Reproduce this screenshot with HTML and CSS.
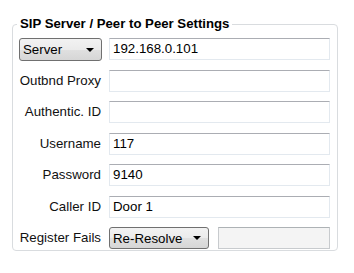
FILE: index.html
```html
<!DOCTYPE html>
<html>
<head>
<meta charset="utf-8">
<link rel="stylesheet" href="styles.css">
</head>
<body>
<fieldset class="group">
  <legend class="group-title">SIP Server / Peer to Peer Settings</legend>
  <div class="form">
    <div class="combo combo-server"><span class="combo-text">Server</span><span class="arrow"></span></div>
    <div class="field">192.168.0.101</div>

    <div class="label">Outbnd Proxy</div>
    <div class="field"></div>

    <div class="label">Authentic. ID</div>
    <div class="field"></div>

    <div class="label">Username</div>
    <div class="field">117</div>

    <div class="label">Password</div>
    <div class="field">9140</div>

    <div class="label">Caller ID</div>
    <div class="field">Door 1</div>

    <div class="label">Register Fails</div>
    <div class="split">
      <div class="combo combo-reg"><span class="combo-text">Re-Resolve</span><span class="arrow"></span></div>
      <div class="field field-disabled"></div>
    </div>
  </div>
</fieldset>
</body>
</html>
```
FILE: styles.css
```css
html, body {
  margin: 0;
  padding: 0;
  background: #ffffff;
}
body {
  font-family: "Liberation Sans", Arial, sans-serif;
  font-size: 13.3px;
  color: #111;
}
.group {
  box-sizing: border-box;
  width: 326px;
  height: 235px;
  margin: 16px 0 0 12px;
  padding: 6px 7px 0 6px;
  border: 1px solid #d9dcdf;
  border-radius: 4px;
}
.group-title {
  font-weight: bold;
  font-size: 13.2px;
  line-height: 16px;
  padding: 0 3px;
  margin-left: -2px;
  color: #000;
}
.form {
  display: grid;
  grid-template-columns: 83px 221px;
  grid-auto-rows: 22px;
  column-gap: 7px;
  row-gap: 9.5px;
  align-items: center;
}
.label {
  text-align: right;
  padding-right: 1px;
  line-height: 22px;
  white-space: nowrap;
}
.field {
  box-sizing: border-box;
  height: 22px;
  border: 1px solid #e3e9ef;
  border-top-color: #abadb3;
  padding: 0 3px;
  line-height: 20px;
  background: #fff;
  color: #000;
}
.field-disabled {
  background: #f4f4f4;
  border-color: #c8cbce;
  border-top-color: #adb2b5;
}
.combo {
  box-sizing: border-box;
  height: 23px;
  border: 1px solid #707070;
  border-radius: 3px;
  background: linear-gradient(#f2f2f2 0%, #ebebeb 50%, #e0e0e0 51%, #d6d6d6 100%);
  display: flex;
  align-items: center;
  justify-content: space-between;
  padding: 0 7px 0 3px;
  color: #000;
}
.combo-server {
  align-self: start;
}
.combo-reg {
  width: 100px;
  height: 22px;
}
.arrow {
  width: 0;
  height: 0;
  border-left: 4px solid transparent;
  border-right: 4px solid transparent;
  border-top: 4px solid #000;
}
.split {
  display: flex;
  gap: 9px;
  height: 22px;
}
.split .field {
  flex: 1;
}
```
